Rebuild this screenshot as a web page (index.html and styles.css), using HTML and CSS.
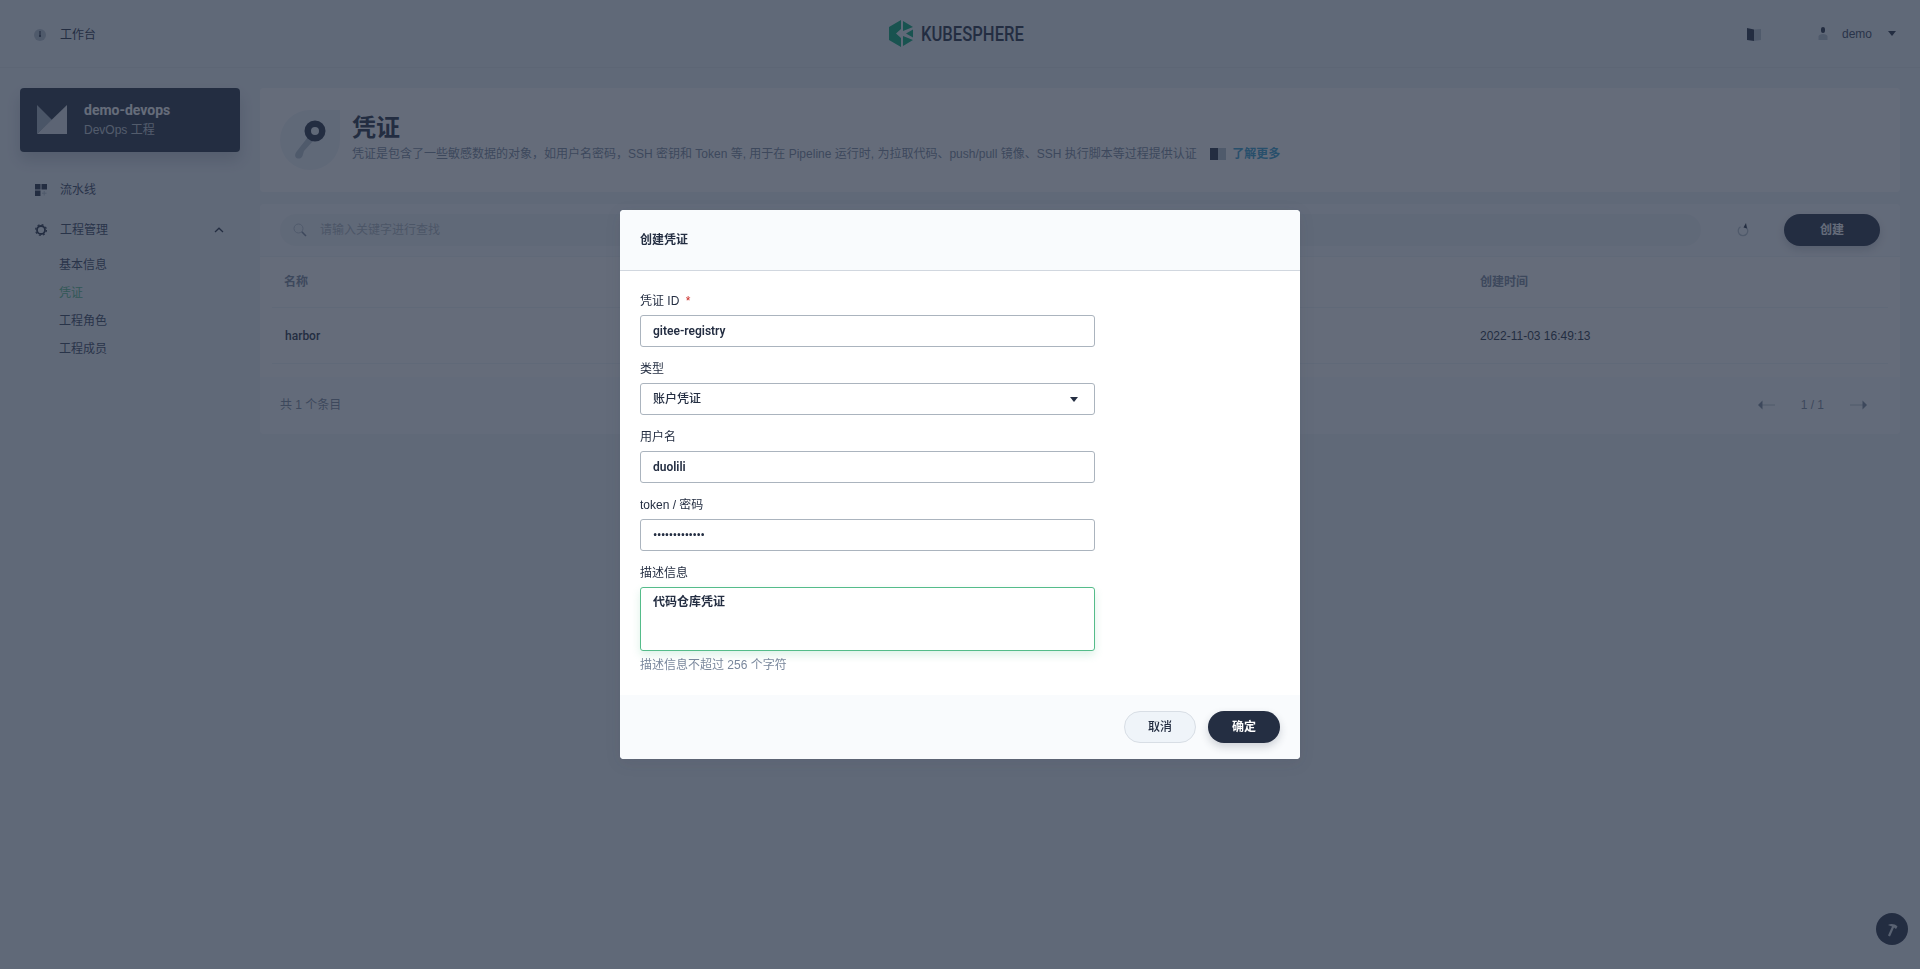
FILE: index.html
```html
<!DOCTYPE html>
<html lang="zh-CN">
<head>
<meta charset="utf-8">
<title>凭证 - KubeSphere</title>
<link rel="stylesheet" href="styles.css">
</head>
<body>
<div class="page">
  <header class="topbar">
    <div class="top-left">
      <svg class="top-icon" width="14" height="14" viewBox="0 0 14 14"><circle cx="7" cy="7" r="6" fill="#b6c2cd"/><path d="M6.400 3h1.200v4.400L7 9 6.400 7.400z" fill="#242e42"/><circle cx="7" cy="8" r="1.100" fill="#242e42"/></svg>
      <span>工作台</span>
    </div>
    <div class="logo">
      <svg width="24" height="27" viewBox="0 0 24 27"><path d="M12 0 0 7V20L12 27V18L7 13.500 12 9z" fill="#00aa72"/><path d="M14 1 24 7 14 11z" fill="#00aa72"/><path d="M14 16 24 20 14 26z" fill="#00aa72"/><path d="M24 9.500 17 13.500 24 17.500z" fill="#00aa72"/></svg>
      <span class="logo-box"><span class="logo-text">KUBESPHERE</span></span>
    </div>
    <div class="top-right">
      <svg class="book" width="14" height="14" viewBox="0 0 14 14"><path d="M0 1 7 2.500V14L0 13z" fill="#242e42"/><path d="M7 2.500 14 2V13L7 14z" fill="#b6c2cd"/></svg>
      <svg class="user" width="10" height="13" viewBox="0 0 10 13"><rect x="3" y="0" width="4" height="6" rx="2" fill="#242e42"/><path d="M0.500 13V9.500C0.500 8 2.500 7 5 7s4.500 1 4.500 2.500V13z" fill="#b6c2cd"/></svg>
      <span class="user-name">demo</span>
      <span class="caret"></span>
    </div>
  </header>

  <div class="main">
    <aside class="sidebar">
      <div class="project-card">
        <svg width="30" height="30" viewBox="0 0 30 30"><path d="M0 0 15 15 0 29z" fill="#a5b2bf"/><path d="M30 0V29H0z" fill="#e0e4ea"/></svg>
        <div class="project-text">
          <div class="project-name">demo-devops</div>
          <div class="project-type">DevOps 工程</div>
        </div>
      </div>
      <nav class="nav">
        <div class="nav-item">
          <svg width="12" height="12" viewBox="0 0 12 12"><rect width="5.500" height="5.500" fill="#242e42"/><rect x="6.500" width="5.500" height="5.500" fill="#242e42"/><rect y="6.500" width="5.500" height="5.500" fill="#242e42"/><path d="M9.200 7v4.500M7 9.200h4.500" stroke="#b6c2cd" stroke-width="1"/></svg>
          <span>流水线</span>
        </div>
        <div class="nav-item">
          <svg width="12" height="12" viewBox="0 0 12 12"><circle cx="6" cy="6" r="4" fill="none" stroke="#242e42" stroke-width="1.800"/><circle cx="6" cy="6" r="5.400" fill="none" stroke="#242e42" stroke-width="1.200" stroke-dasharray="2 2.240"/></svg>
          <span class="nav-grow">工程管理</span>
          <svg class="chevron" width="10" height="6" viewBox="0 0 10 6"><path d="M1 5 5 1.200 9 5" fill="none" stroke="#242e42" stroke-width="1.300"/></svg>
        </div>
        <div class="sub-nav">
          <div class="sub-item">基本信息</div>
          <div class="sub-item active">凭证</div>
          <div class="sub-item">工程角色</div>
          <div class="sub-item">工程成员</div>
        </div>
      </nav>
    </aside>

    <main class="content">
      <section class="banner">
        <div class="banner-icon">
          <svg width="60" height="60" viewBox="0 0 60 60"><path d="M30 0H60V30A30 30 0 1 1 30 0z" fill="#eff4f9"/><path d="M28 27 33 31 24 41 22.500 46C21.500 49 17 49.500 15.500 47 14.500 45 15.500 43 17 41z" fill="#b6c2cd"/><circle cx="35" cy="21" r="7.250" fill="none" stroke="#242e42" stroke-width="6.500"/></svg>
        </div>
        <div class="banner-text">
          <h1>凭证</h1>
          <p>凭证是包含了一些敏感数据的对象，如用户名密码，SSH 密钥和 Token 等, 用于在 Pipeline 运行时, 为拉取代码、push/pull 镜像、SSH 执行脚本等过程提供认证
            <span class="learn"><svg width="16" height="12" viewBox="0 0 16 12"><rect width="8" height="12" fill="#242e42"/><rect x="8" width="8" height="12" fill="#b6c2cd"/></svg><a class="learn-link">了解更多</a></span>
          </p>
        </div>
      </section>

      <section class="panel">
        <div class="toolbar">
          <div class="search">
            <svg width="14" height="14" viewBox="0 0 14 14"><circle cx="5.500" cy="5.500" r="4.500" fill="none" stroke="#b6c2cd" stroke-width="1"/><path d="M8.800 8.800 13 13" stroke="#79879c" stroke-width="1.600"/></svg>
            <span>请输入关键字进行查找</span>
          </div>
          <svg class="refresh" width="12" height="14" viewBox="0 0 12 14"><path d="M8.500 3.800A4.800 4.800 0 1 1 3.500 3.800" fill="none" stroke="#b6c2cd" stroke-width="1.300"/><path d="M6.500 4.500 9 0 10 5.500z" fill="#242e42"/></svg>
          <div class="btn-create">创建</div>
        </div>
        <div class="table">
          <div class="t-row t-head">
            <div class="col-name">名称</div>
            <div class="col-time">创建时间</div>
          </div>
          <div class="t-row t-body">
            <div class="col-name strong">harbor</div>
            <div class="col-time">2022-11-03 16:49:13</div>
          </div>
        </div>
        <div class="t-foot">
          <span>共 1 个条目</span>
          <div class="pager">
            <svg width="17" height="10" viewBox="0 0 17 10"><path d="M4 5H17" stroke="#b6c2cd" stroke-width="1"/><path d="M4.500 .5V9.500L0 5z" fill="#79879c"/></svg>
            <span class="pager-num">1 / 1</span>
            <svg width="17" height="10" viewBox="0 0 17 10"><path d="M0 5H13" stroke="#b6c2cd" stroke-width="1"/><path d="M12.500 .5V9.500L17 5z" fill="#79879c"/></svg>
          </div>
        </div>
      </section>
    </main>
  </div>

  <div class="fab">
    <svg width="16" height="16" viewBox="0 0 16 16"><path d="M4 4C7 2.500 10.500 2.800 13.500 5.500L12 8 10 6.500 6 15.500 4 14.500 8 5.500z" fill="#d8dee5"/></svg>
  </div>
</div>

<div class="overlay">
  <div class="dialog">
    <div class="dialog-head">创建凭证</div>
    <div class="dialog-body">
      <div class="field">
        <div class="label">凭证 ID <i class="req">*</i></div>
        <div class="input">gitee-registry</div>
      </div>
      <div class="field">
        <div class="label">类型</div>
        <div class="input select"><span>账户凭证</span><span class="select-caret"></span></div>
      </div>
      <div class="field">
        <div class="label">用户名</div>
        <div class="input">duolili</div>
      </div>
      <div class="field">
        <div class="label">token / 密码</div>
        <div class="input dots">•••••••••••••</div>
      </div>
      <div class="field last">
        <div class="label">描述信息</div>
        <div class="input textarea">代码仓库凭证</div>
        <div class="hint">描述信息不超过 256 个字符</div>
      </div>
    </div>
    <div class="dialog-foot">
      <div class="btn btn-cancel">取消</div>
      <div class="btn btn-ok">确定</div>
    </div>
  </div>
</div>
</body>
</html>
```
FILE: styles.css
```css
* { box-sizing: border-box; }
html, body { margin: 0; height: 100%; overflow: hidden; }
body {
  background: #eff4f9;
  color: #242e42;
  font: 12px/20px "Liberation Sans", "Noto Sans CJK SC", sans-serif;
}
.page { position: relative; height: 100%; }

.topbar {
  height: 68px;
  display: grid;
  grid-template-columns: 1fr auto 1fr;
  align-items: center;
  border-bottom: 1px solid #e3e9ef;
}
.top-left { display: flex; align-items: center; gap: 13px; padding-left: 33px; margin-top: 2px; }
.logo { display: flex; align-items: center; gap: 8px; margin-right: 7px; }
.logo-box { display: block; width: 103px; height: 28px; }
.logo-text {
  display: block;
  font: 500 20px/28px Roboto, sans-serif;
  color: #242e42;
  white-space: nowrap;
  transform: scaleX(.83);
  transform-origin: 0 50%;
}
.top-right { display: flex; align-items: center; justify-content: flex-end; padding-right: 24px; }
.book { margin-right: 57px; }
.user { margin-right: 14px; }
.user-name { color: #36435c; margin-right: 16px; }
.caret { width: 0; height: 0; border: 4.500px solid transparent; border-top: 5px solid #242e42; border-bottom: 0; }

.main { display: flex; padding-top: 20px; }
.sidebar { width: 260px; padding: 0 20px; flex: none; }
.project-card {
  height: 64px;
  background: #242e42;
  border-radius: 4px;
  padding: 0 17px;
  display: flex;
  align-items: center;
  gap: 17px;
  box-shadow: 0 8px 16px 0 rgba(36, 46, 66, .2);
}
.project-name { color: #fff; font: 700 14px/20px Roboto, sans-serif; margin-top: -1px; }
.project-type { color: #c1c9d1; line-height: 20px; }
.nav { margin-top: 18px; }
.nav-item { height: 40px; display: flex; align-items: center; padding-left: 15px; gap: 13px; color: #36435c; }
.nav-grow { flex: 1; }
.chevron { margin-right: 16px; }
.sub-nav { padding: 1px 0 0 39px; }
.sub-item { height: 28px; line-height: 28px; color: #36435c; }
.sub-item.active { color: #55bc8a; }

.content { flex: 1; min-width: 0; padding-right: 20px; }
.banner {
  height: 104px;
  background: #fff;
  border-radius: 4px;
  padding: 22px 20px 0;
  display: flex;
  gap: 12px;
}
.banner-icon { width: 60px; height: 60px; }
.banner-text { margin-top: 2px; }
.banner-text h1 { margin: 0; font: 700 24px/32px Roboto, "Noto Sans CJK SC", sans-serif; }
.banner-text p { margin: 0; line-height: 20px; color: #79879c; }
.learn { display: inline-flex; align-items: center; gap: 6px; margin-left: 10px; vertical-align: top; }
.learn-link { color: #329dce; font-weight: 700; }

.panel { margin-top: 12px; background: #f9fbfd; border-radius: 4px; height: 230px; }
.toolbar { height: 53px; padding: 10px 20px; display: flex; align-items: flex-start; border-bottom: 1px solid #eff4f9; }
.search {
  flex: 1;
  height: 32px;
  border-radius: 16px;
  background: #eff4f9;
  padding: 0 13px;
  display: flex;
  align-items: center;
  gap: 13px;
  color: #abb4be;
}
.refresh { margin: 9px 35px 0 36px; }
.btn-create {
  width: 96px;
  height: 32px;
  border-radius: 16px;
  background: #242e42;
  color: #fff;
  text-align: center;
  line-height: 32px;
  font-weight: 700;
  box-shadow: 0 4px 8px 0 rgba(36, 46, 66, .2);
}
.table { background: #fff; padding: 0 12px 12px; height: 120px; }
.t-row { display: flex; align-items: center; border-bottom: 1px solid #eff4f9; }
.t-head { height: 51px; color: #79879c; font-weight: 700; }
.t-body { height: 56px; padding-top: 1px; }
.col-name { flex: 1; padding-left: 12px; }
.col-time { width: 408px; }
.strong { padding-left: 13px; font: 500 12px/20px Roboto, sans-serif; }
.t-foot { display: flex; height: 55px; align-items: center; justify-content: space-between; padding: 0 33px 0 20px; color: #79879c; }
.pager { display: flex; align-items: center; gap: 26px; }

.fab {
  position: fixed;
  right: 12px;
  bottom: 24px;
  width: 32px;
  height: 32px;
  border-radius: 50%;
  background: #242e42;
  display: flex;
  align-items: center;
  justify-content: center;
}

.overlay {
  position: fixed;
  inset: 0;
  background: rgba(35, 45, 65, .7);
  display: flex;
  align-items: center;
  justify-content: center;
}
.dialog { width: 680px; background: #fff; border-radius: 4px; overflow: hidden; box-shadow: 0 4px 16px 0 rgba(35, 45, 65, .1); }
.dialog-head {
  height: 61px;
  padding: 0 20px;
  line-height: 60px;
  background: #f9fbfd;
  border-bottom: 1px solid #d1d7df;
  font-weight: 700;
}
.dialog-body { padding: 20px; }
.field { width: 455px; margin-bottom: 12px; }
.field.last { margin-bottom: 0; }
.label { height: 20px; line-height: 20px; margin-bottom: 4px; color: #242e42; }
.req { color: #ca2621; font-style: normal; margin-left: 3px; }
.input {
  height: 32px;
  border: 1px solid #abb4be;
  border-radius: 3px;
  padding: 0 12px;
  font: 600 12px/30px Roboto, "Noto Sans CJK SC", sans-serif;
  background: #fff;
}
.dots { letter-spacing: -.3px; }
.select { display: flex; justify-content: space-between; align-items: center; font-weight: 500; }
.select-caret { width: 0; height: 0; margin-right: 4px; border: 4.500px solid transparent; border-top: 5px solid #242e42; border-bottom: 0; }
.textarea {
  height: 64px;
  border-color: #55bc8a;
  box-shadow: 0 4px 8px 0 rgba(85, 188, 138, .2);
  line-height: 20px;
  padding-top: 4px;
  font-weight: 700;
}
.hint { margin-top: 4px; height: 20px; color: #79879c; }
.dialog-foot { height: 64px; background: #f9fbfd; padding: 16px 20px; display: flex; justify-content: flex-end; gap: 12px; }
.btn { width: 72px; height: 32px; border-radius: 16px; text-align: center; font-weight: 700; line-height: 32px; }
.btn-cancel { background: #eff4f9; border: 1px solid #d8dee5; line-height: 30px; font-weight: 500; }
.btn-ok { background: #242e42; color: #fff; box-shadow: 0 4px 8px 0 rgba(36, 46, 66, .2); }
```
